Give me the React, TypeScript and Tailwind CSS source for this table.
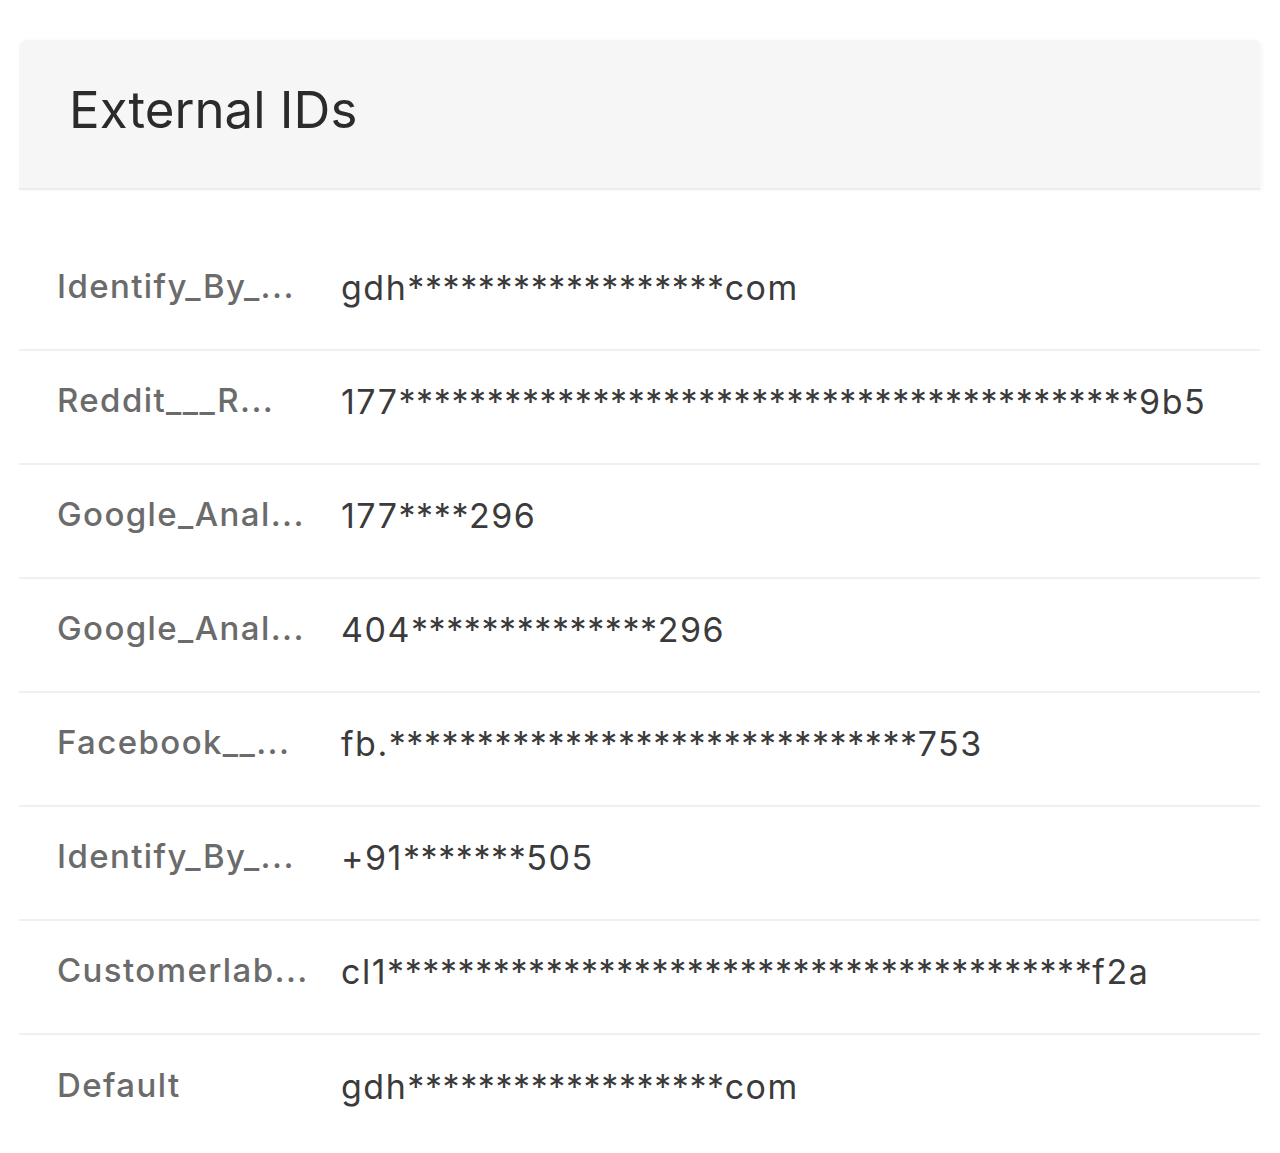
import React from "react";

interface ExternalId {
  source: string;
  prefix: string;
  masked: number;
  suffix: string;
}

const externalIds: ExternalId[] = [
  { source: "Identify_By_...", prefix: "gdh", masked: 18, suffix: "com" },
  { source: "Reddit___R...", prefix: "177", masked: 42, suffix: "9b5" },
  { source: "Google_Anal...", prefix: "177", masked: 4, suffix: "296" },
  { source: "Google_Anal...", prefix: "404", masked: 14, suffix: "296" },
  { source: "Facebook__...", prefix: "fb.", masked: 30, suffix: "753" },
  { source: "Identify_By_...", prefix: "+91", masked: 7, suffix: "505" },
  { source: "Customerlab...", prefix: "cl1", masked: 40, suffix: "f2a" },
  { source: "Default", prefix: "gdh", masked: 18, suffix: "com" },
];

export default function App() {
  return (
    <div
      className="min-h-[1153px] bg-white pt-10 pl-[19px] pr-5"
      style={{ fontFamily: "Inter, 'Noto Sans', sans-serif" }}
    >
      <div className="rounded-t-lg bg-white">
        <div className="h-[150px] flex items-center pl-[50px] pb-2 bg-[#f6f6f6] rounded-t-lg border-b-2 border-[#ececec] shadow-[2px_0_4px_rgba(0,0,0,0.04)]">
          <h2 className="text-[51px] font-normal text-[#2b2b2b]">External IDs</h2>
        </div>

        <div className="pt-[47px]">
          {externalIds.map((item, index) => (
            <div
              key={index}
              className={`flex items-center h-[114px] pl-[38px] pb-3 ${
                index < externalIds.length - 1 ? "border-b-2 border-[#f0f0f0]" : ""
              }`}
            >
              <div className="w-[284px] shrink-0 text-[33px] font-medium tracking-[1.4px] text-[#6b6b6b] whitespace-nowrap overflow-hidden">
                {item.source}
              </div>
              <div className="text-[34px] text-[#3b3b3b] whitespace-nowrap">
                <span className="tracking-[1.5px]">{item.prefix}</span>
                <span className="tracking-[0.6px]">{"*".repeat(item.masked)}</span>
                <span className="tracking-[1.5px]">{item.suffix}</span>
              </div>
            </div>
          ))}
        </div>
      </div>
    </div>
  );
}
